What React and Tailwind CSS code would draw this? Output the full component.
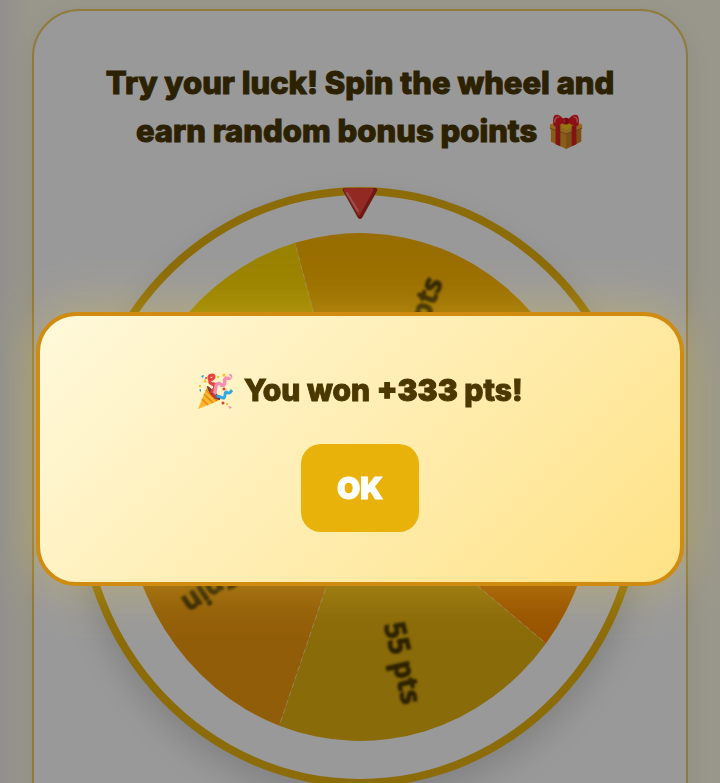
import React, { useState } from 'react';

const CENTER_X = 276;
const CENTER_Y = 292;
const RADIUS_X = 236;
const RADIUS_Y = 254;

const segments = [
  { label: '333 pts', color: '#ffb700', start: 254, textAngle: -70 },
  { label: '100 pts', color: '#ff8c00', start: 326, textAngle: 2 },
  { label: '55 pts', color: '#e6b210', start: 38, textAngle: 77 },
  { label: 'Free Spin', color: '#f39c0e', start: 110, textAngle: 146 },
  { label: '10 pts', color: '#ffd900', start: 182, textAngle: 217 },
];

const pointAt = (angle) => {
  const rad = (angle * Math.PI) / 180;
  return [CENTER_X + RADIUS_X * Math.cos(rad), CENTER_Y + RADIUS_Y * Math.sin(rad)];
};

const slicePath = (start) => {
  const [x1, y1] = pointAt(start);
  const [x2, y2] = pointAt(start + 72);
  return `M${CENTER_X} ${CENTER_Y} L${x1} ${y1} A${RADIUS_X} ${RADIUS_Y} 0 0 1 ${x2} ${y2} Z`;
};

const labelRadius = (angle) => {
  const rad = (angle * Math.PI) / 180;
  const a = Math.cos(rad) / RADIUS_X;
  const b = Math.sin(rad) / RADIUS_Y;
  return 0.88 / Math.sqrt(a * a + b * b);
};

const GiftIcon = () => (
  <svg viewBox="0 0 36 38" className="ml-1 inline-block h-9 w-9 align-[-8px]" aria-hidden="true">
    <path d="M2 12 L18 6 L34 12 V29 L18 37 L2 29 Z" fill="#e39a2b" />
    <path d="M18 19 L34 12 V29 L18 37 Z" fill="#cf8124" />
    <path d="M1 11 L18 5 L35 11 V15 L18 21 L1 15 Z" fill="#f2ad38" />
    <path d="M12 13 L19 10 L25 13 L18 17 Z" fill="#f8c51c" />
    <path d="M1 15 L18 21 L35 15" fill="none" stroke="#b86d1c" strokeWidth="1" />
    <path d="M7 11 L12 12 V34 L7 32 Z M24 13 L29 11 V32 L24 34 Z" fill="#d81f26" />
    <path d="M17 8 C13 0 6 -1 5 3 C4 7 4 11 6 13 C11 13 14 10 17 8 Z" fill="#ed1c24" />
    <path d="M19 8 C23 0 30 -1 31 3 C32 7 32 11 30 13 C25 13 22 10 19 8 Z" fill="#ed1c24" />
    <path d="M6 9 C6 5 8 3 11 3 M30 9 C30 5 28 3 26 3" fill="none" stroke="#ff8a80" strokeWidth="1.5" />
    <rect x="14.5" y="4" width="7" height="7" rx="3" fill="#c9151e" />
    <path d="M16 6 V9" stroke="#ff6b65" strokeWidth="1" />
  </svg>
);

const PartyIcon = () => (
  <svg viewBox="0 0 36 36" className="mr-1 inline-block h-9 w-9 align-[-8px]" aria-hidden="true">
    <path d="M1 36 L10 14 C12 19 17 25 23 27 Z" fill="#ffb52e" />
    <path d="M5 26 L11 32 M7 21 L16 30 M9 17 L20 28" stroke="#e38a13" strokeWidth="1.5" />
    <path d="M10 14 C9 11 14 15 18 19 C22 23 25 27 22 27 C17 27 11 19 10 14 Z" fill="#7c3b32" />
    <path d="M15 20 C14 16 19 17 18 13 C16 9 12 12 13 8 C11 4 12 2 16 2 C19 4 15 8 12 6 M14 12 C18 8 20 14 16 14" fill="none" stroke="#e8423f" strokeWidth="3" />
    <path d="M17 21 C20 18 17 14 20 11 C24 9 24 14 27 12 C29 9 26 7 29 5 C34 7 34 2 33 3" fill="none" stroke="#f48fb1" strokeWidth="3.5" />
    <path d="M19 24 C22 21 24 26 27 25 C29 23 27 20 29 19 C33 22 34 18 35 17" fill="none" stroke="#2fa9e0" strokeWidth="3" />
    <path d="M15 21 L19 25" stroke="#c83a38" strokeWidth="3" />
    <g fill="#fbc02d">
      <circle cx="8" cy="8" r="1.5" />
      <circle cx="21" cy="4" r="1.3" />
      <circle cx="27" cy="2" r="1.5" />
      <circle cx="3" cy="13" r="1.2" />
      <circle cx="30" cy="31" r="1.2" />
    </g>
    <g fill="#e53935">
      <circle cx="27" cy="16" r="1.5" />
      <circle cx="26" cy="30" r="1.5" />
      <circle cx="9" cy="5" r="1" />
    </g>
    <path d="M4 3 L7 2 L6 5 Z M2 17 L4 16 L4 19 Z" fill="#1e9bd0" />
    <path d="M31 33 L35 34 L33 36 Z" fill="#f48fb1" />
  </svg>
);

const Pointer = () => (
  <svg viewBox="0 0 36 32" className="absolute -top-2 left-1/2 h-8 w-9 -translate-x-1/2" aria-hidden="true">
    <path d="M2 1 H34 Q36 2 35 4 L20 31 Q18 33 16 31 L1 4 Q0 2 2 1 Z" fill="#b52a24" />
    <path d="M3 1 H31 Q32 2 31 4 L18 28 Q17 29 16 28 L2 4 Q1 2 3 1 Z" fill="#f4453b" />
    <path d="M5 6 L16 24" stroke="#f58a84" strokeWidth="2" strokeLinecap="round" />
  </svg>
);

const Wheel = () => (
  <div className="relative mx-[42px] rounded-[50%] border-8 border-[#e8b410] bg-white shadow-[0_16px_32px_rgba(0,0,0,0.15)]">
    <svg viewBox="0 0 552 584" className="block w-full" role="img" aria-label="Prize wheel">
      {segments.map((segment) => (
        <path key={segment.label} d={slicePath(segment.start)} fill={segment.color} />
      ))}
      {segments.map((segment) => {
        const [x, y] = pointAt(segment.start);
        return (
          <line key={segment.label} x1={CENTER_X} y1={CENTER_Y} x2={x} y2={y} stroke="#fff3c4" strokeOpacity="0.6" strokeDasharray="5 4" />
        );
      })}
      <g className="stroke-[#4a3800] stroke-1 font-['Open_Sans',sans-serif] text-[28px] font-bold blur-[1px]" fill="#4a3800">
        {segments.map((segment) => (
          <text
            key={segment.label}
            x={labelRadius(segment.textAngle)}
            y="8"
            textAnchor="end"
            transform={`translate(${CENTER_X} ${CENTER_Y}) rotate(${segment.textAngle})`}
          >
            {segment.label}
          </text>
        ))}
      </g>
    </svg>
    <Pointer />
  </div>
);

const WinModal = ({ points, onClose }) => (
  <div className="fixed inset-0 flex items-center justify-center bg-black/40 pt-[114px]">
    <div
      role="dialog"
      aria-modal="true"
      aria-labelledby="win-message"
      className="w-[90%] rounded-[40px] border-4 border-[#d08c10] bg-linear-135 from-[#fff9db] to-[#ffe285] px-8 py-[50px] text-center shadow-[0_0_50px_rgba(255,215,60,0.35)]"
    >
      <p id="win-message" className="mb-[30px] text-[30px] leading-12 font-extrabold text-[#4a3800] [-webkit-text-stroke:1px_#4a3800]">
        <PartyIcon /> You won <strong className="font-black">+{points}</strong> pts!
      </p>
      <button
        type="button"
        onClick={onClose}
        className="rounded-[20px] bg-[#e8b20a] px-9 py-5 text-[30px] leading-12 font-black text-white [-webkit-text-stroke:1px_white]"
      >
        OK
      </button>
    </div>
  </div>
);

const App = () => {
  const [showModal, setShowModal] = useState(true);

  return (
    <div className="h-screen overflow-hidden bg-linear-to-r from-[#f3efea] via-[#fffbe8] via-4% to-[#fffbe8] px-8 pt-[9px] font-[Inter,sans-serif]">
      <div className="rounded-[48px] border-2 border-[#f0ca60] bg-white pt-12 pb-12 shadow-[0_8px_24px_rgba(0,0,0,0.08)]">
        <h1 className="mx-auto mb-8 max-w-[560px] text-center text-[31px] leading-12 font-extrabold text-[#4a3800] [-webkit-text-stroke:1px_#4a3800]">
          Try your luck! Spin the wheel and earn random bonus points <GiftIcon />
        </h1>
        <Wheel />
      </div>
      {showModal && <WinModal points={333} onClose={() => setShowModal(false)} />}
    </div>
  );
};

export default App;
